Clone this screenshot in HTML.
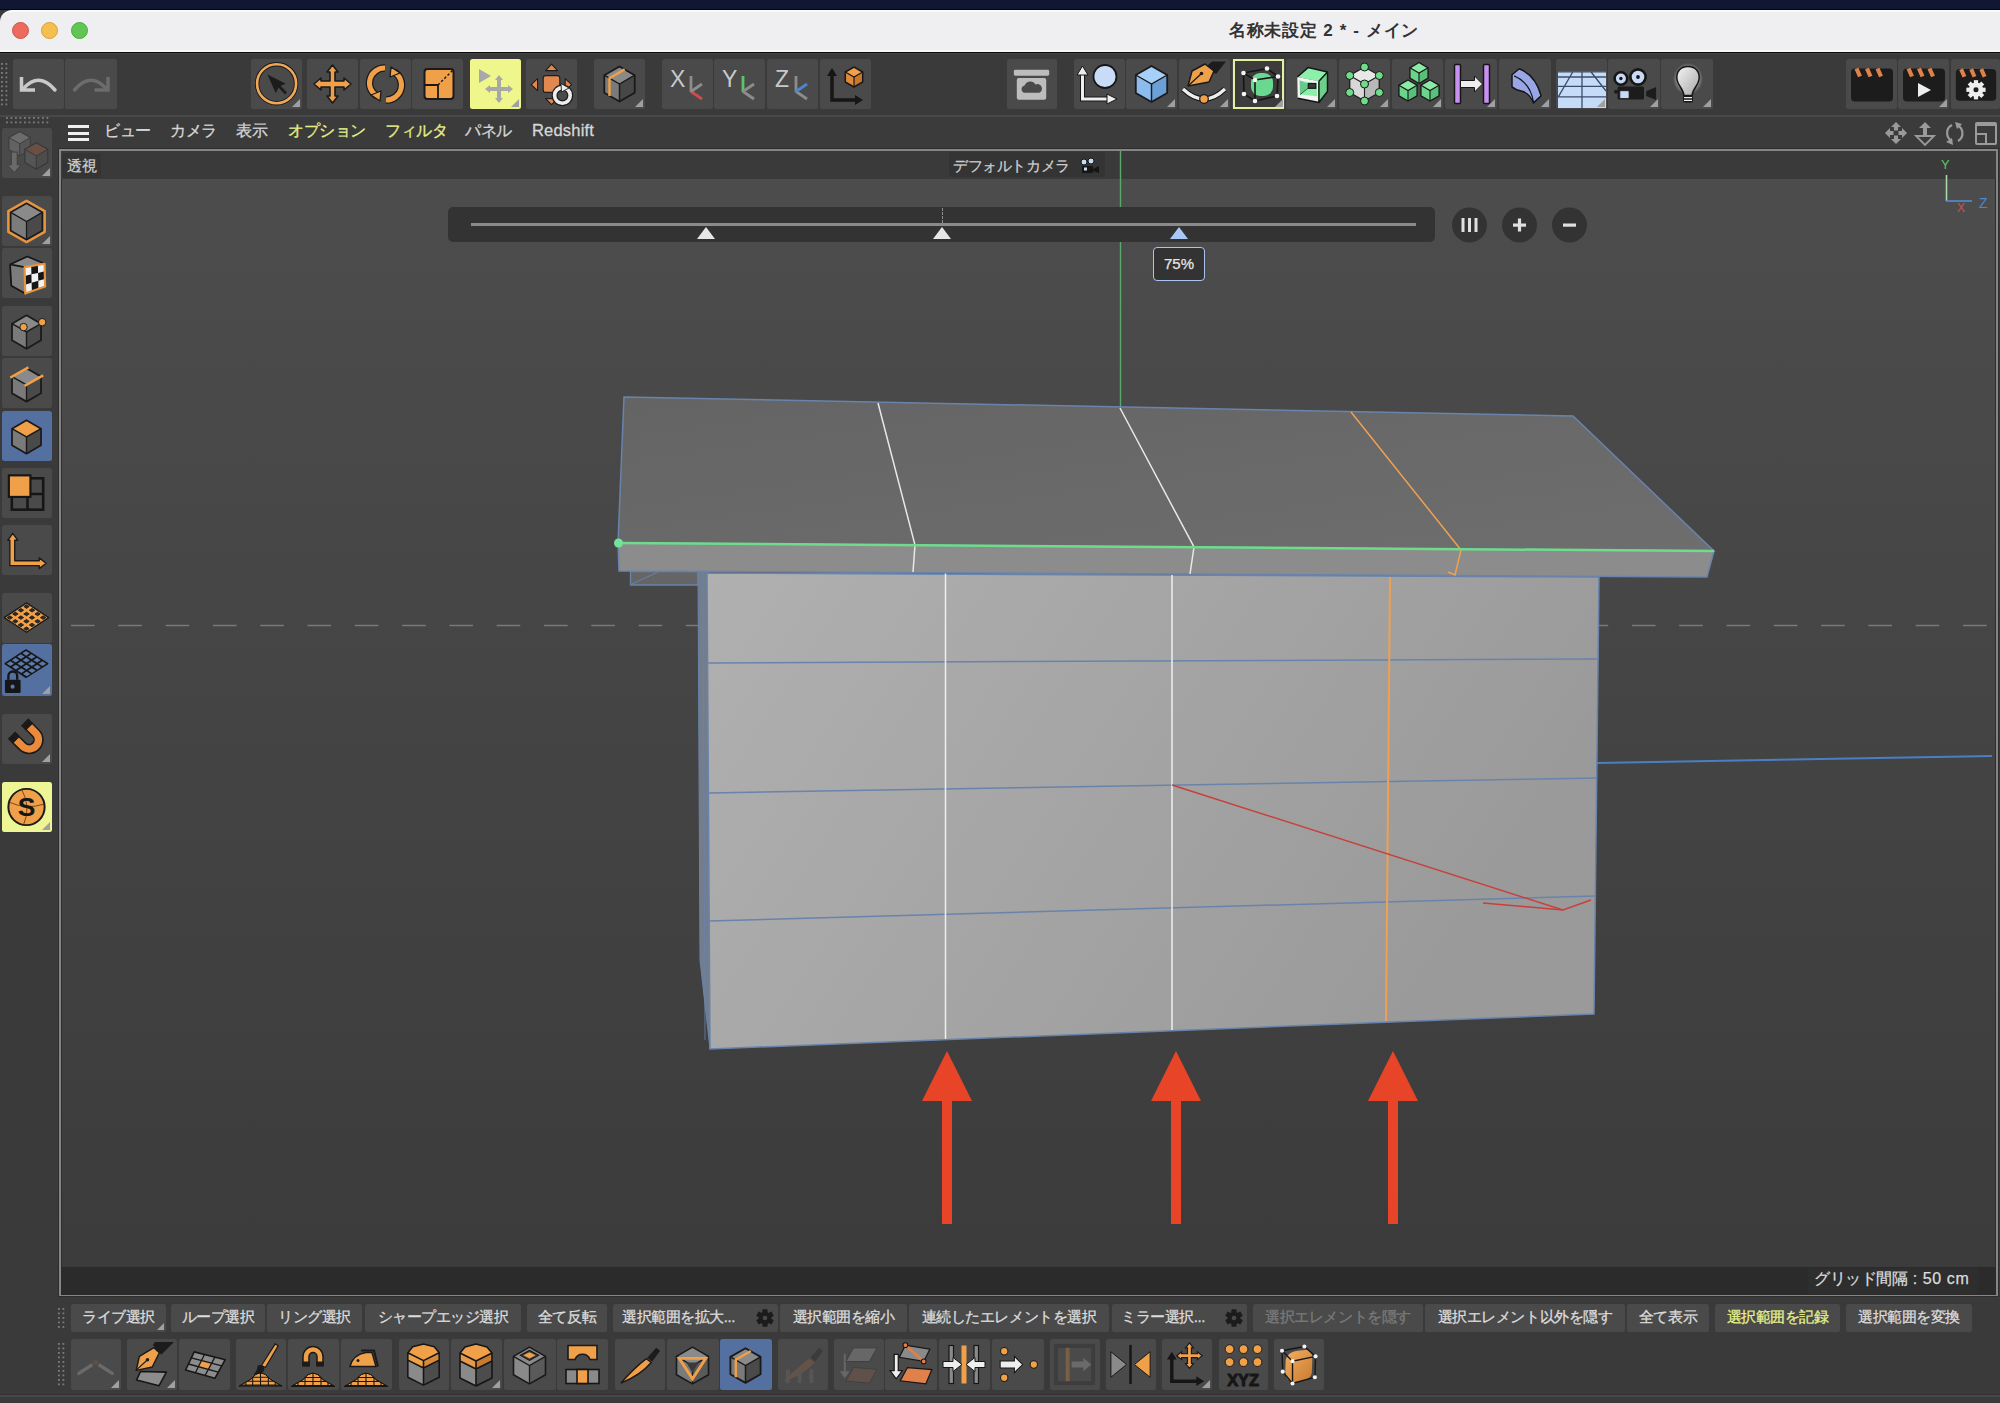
<!DOCTYPE html>
<html><head><meta charset="utf-8">
<style>
*{margin:0;padding:0;box-sizing:border-box}
html,body{width:2000px;height:1403px;overflow:hidden;background:#3a3a3a;font-family:"Liberation Sans",sans-serif}
.a{position:absolute}
#navy{left:0;top:0;width:2000px;height:10px;background:#111633;border-bottom:1px solid #05060f}
#title{left:0;top:10px;width:2000px;height:42px;background:#efeff2;border-radius:12px 0 0 0;border-top:2px solid #f9f9fb;border-bottom:2px solid #f7f7f9}
#title .t{left:1229px;top:7px;font-size:17px;color:#333;letter-spacing:0.7px;font-weight:700;white-space:nowrap}
.tl{width:17px;height:17px;border-radius:50%;top:10px}
#blk{left:0;top:52px;width:2000px;height:1.5px;background:#0a0a0a}
#tb{left:0;top:53px;width:2000px;height:64px;background:#3a3a3a;border-top:1px solid #444;border-bottom:2px solid #484848}
.b{position:absolute;width:51px;height:50px;background:#4a4a4a;border-radius:2.5px}
.b svg{position:absolute;left:0;top:0}
.tri{position:absolute;right:2px;bottom:2px;width:0;height:0;border-left:8px solid transparent;border-bottom:8px solid #a0a0a0}
#menu{left:59px;top:117px;width:1941px;height:32px;background:#3b3b3b}
.mi{position:absolute;top:4px;font-size:15.5px;letter-spacing:-0.4px;-webkit-text-stroke:0.3px currentColor;color:#d6d6d6;white-space:nowrap}
.mi.y{color:#e3ef86}
#vp{left:59px;top:149px;width:1939px;height:1147px;border:2px solid #858585;box-shadow:0 0 0 1px #2e2e2e,inset 0 0 0 1px #2e2e2e;background:linear-gradient(#4d4d4d,#3b3b3b)}
#vh{left:61px;top:151px;width:1935px;height:28px;background:#3a3a3a}
#status{left:61px;top:1267px;width:1935px;height:28px;background:#2b2b2b}
.sb{position:absolute;top:1304px;height:28px;background:#4a4a4a;border-radius:2.5px;font-size:15px;letter-spacing:-0.45px;-webkit-text-stroke:0.3px currentColor;color:#dcdcdc;white-space:nowrap;text-align:center;line-height:26px}
.grip{position:absolute;background-image:linear-gradient(transparent 1.8px,#3a3a3a 1.8px),linear-gradient(90deg,#7c7c7c 1.8px,transparent 1.8px);background-size:4.5px 4.5px}

.lbl{font-size:15px;letter-spacing:-0.4px;-webkit-text-stroke:0.25px currentColor;color:#cfcfcf;white-space:nowrap}
</style></head><body>

<div id="navy" class="a"></div>
<div id="title" class="a">
  <div class="a tl" style="left:12px;background:#ed6a5e;border:0.6px solid #d05548"></div>
  <div class="a tl" style="left:41px;background:#f5bf4f;border:0.6px solid #d8a040"></div>
  <div class="a tl" style="left:71px;background:#61c554;border:0.6px solid #4ea840"></div>
  <div class="a t">名称未設定<span style="letter-spacing:1.1px"> 2 * - </span>メイン</div>
</div>
<div id="blk" class="a"></div>
<div id="tb" class="a"></div>

<div id="menu" class="a">
  <div class="a" style="left:9px;top:8px;width:21px;height:16px;border-top:3px solid #f0f0f0;border-bottom:3px solid #f0f0f0"><div style="margin-top:3.5px;height:3px;background:#f0f0f0"></div></div>
  <div class="mi" style="left:45px">ビュー</div>
  <div class="mi" style="left:111px">カメラ</div>
  <div class="mi" style="left:177px">表示</div>
  <div class="mi y" style="left:229px">オプション</div>
  <div class="mi y" style="left:326px">フィルタ</div>
  <div class="mi" style="left:406px">パネル</div>
  <div class="mi" style="left:473px;font-size:16.5px;letter-spacing:0.2px">Redshift</div>
</div>

<div id="vp" class="a"></div>
<div id="vh" class="a"></div>
<div id="status" class="a"></div>

<svg class="a" style="left:0;top:0" width="2000" height="1403" viewBox="0 0 2000 1403">
<defs>
<linearGradient id="gtop" x1="0" y1="0" x2="1" y2="1"><stop offset="0" stop-color="#646464"/><stop offset="1" stop-color="#6e6e6e"/></linearGradient>
<linearGradient id="gbody" x1="0" y1="0" x2="1" y2="0.35"><stop offset="0" stop-color="#b0b0b0"/><stop offset="1" stop-color="#9a9a9a"/></linearGradient>
</defs>
<!-- dashed horizon -->
<line x1="71" y1="625.5" x2="1994" y2="625.5" stroke="#7a7a7a" stroke-width="1.6" stroke-dasharray="23.6 23.7"/>

<!-- green world Y axis -->
<line x1="1120.5" y1="151" x2="1120.5" y2="408" stroke="#5aa86a" stroke-width="1.4"/>
<!-- blue axis right -->
<line x1="1597" y1="763" x2="1992" y2="756" stroke="#4a7fc6" stroke-width="2"/>
<!-- roof underside piece -->
<polygon points="630.5,571.5 698,571.5 698,585 630.5,585" fill="#656565" stroke="#6884ac" stroke-width="1.3"/>
<line x1="632" y1="584" x2="658" y2="572" stroke="#6884ac" stroke-width="1"/>
<!-- body side strip -->
<polygon points="698,572 708,572 710,1049 700,960" fill="#737d8c" stroke="#6884ac" stroke-width="1"/><line x1="703" y1="573" x2="705" y2="1040" stroke="#6884ac" stroke-width="0.8"/>
<!-- body front -->
<polygon points="707,573 1599,577 1594,1014 710,1049" fill="url(#gbody)" stroke="#6884ac" stroke-width="1.5"/>
<!-- body horizontal lines -->
<polyline points="708,663 1599,659" fill="none" stroke="#6884ac" stroke-width="1.5"/>
<polyline points="709,793 1597,778" fill="none" stroke="#6884ac" stroke-width="1.5"/>
<polyline points="709,921 1595,896" fill="none" stroke="#6884ac" stroke-width="1.5"/>
<!-- vertical lines -->
<line x1="945.5" y1="573" x2="945.5" y2="1039" stroke="#efefef" stroke-width="1.5"/>
<line x1="1172" y1="575" x2="1172" y2="1030" stroke="#efefef" stroke-width="1.5"/>
<line x1="1390" y1="577" x2="1386" y2="1021" stroke="#f0a050" stroke-width="2"/>
<!-- red lines -->
<polyline points="1172,785 1563,910" fill="none" stroke="#c8403a" stroke-width="1.5"/>
<polyline points="1483,903 1563,910 1591,900" fill="none" stroke="#c8403a" stroke-width="1.5"/>
<!-- roof top -->
<polygon points="624,397 1573,416 1714,551 618,543" fill="url(#gtop)" stroke="#6884ac" stroke-width="1.5"/>
<!-- roof front -->
<polygon points="618,543 1714,551 1707,577 619,571" fill="#8c8c8c" stroke="#6884ac" stroke-width="1.5"/>
<!-- roof cut lines -->
<polyline points="878,403 915,545 913,572" fill="none" stroke="#e8e8e8" stroke-width="1.5"/>
<polyline points="1120,408 1194,547 1190,574" fill="none" stroke="#e8e8e8" stroke-width="1.5"/>
<polyline points="1351,412 1461,550 1455,575 1448,572" fill="none" stroke="#f0a050" stroke-width="1.5"/>
<!-- green edge -->
<line x1="618" y1="543" x2="1714" y2="551" stroke="#6fdc8c" stroke-width="2.5"/>
<circle cx="618.5" cy="543" r="4.5" fill="#74e39a"/>
<!-- red arrows -->
<g fill="#e84427">
<polygon points="947,1051 922,1101 972,1101"/><rect x="942" y="1100" width="10" height="124"/>
<polygon points="1176,1051 1151,1101 1201,1101"/><rect x="1171" y="1100" width="10" height="124"/>
<polygon points="1393,1051 1368,1101 1418,1101"/><rect x="1388" y="1100" width="10" height="124"/>
</g>
</svg>


<div class="b" style="left:13px;top:59px;width:51px;height:50px;background:#4a4a4a;"><svg width="51" height="50" viewBox="0 0 51 50"><path d="M8.5,18 V31 H22" fill="none" stroke="#c9c9c9" stroke-width="3.5"/><path d="M10,30 Q26,12 42,31" fill="none" stroke="#c9c9c9" stroke-width="3.5" stroke-linecap="round"/></svg></div>
<div class="b" style="left:65px;top:59px;width:52px;height:50px;background:#4a4a4a;"><svg width="52" height="50" viewBox="0 0 51 50"><path d="M42.5,18 V31 H29" fill="none" stroke="#6c6c6c" stroke-width="3.5"/><path d="M41,30 Q25,12 9,31" fill="none" stroke="#6c6c6c" stroke-width="3.5" stroke-linecap="round"/></svg></div>
<div class="b" style="left:251px;top:59px;width:51px;height:50px;background:#4a4a4a;"><svg width="51" height="50" viewBox="0 0 51 50"><circle cx="25.6" cy="24.7" r="19.5" fill="none" stroke="#1a1a1a" stroke-width="4.4"/><circle cx="25.6" cy="24.7" r="19.5" fill="none" stroke="#f0a858" stroke-width="2.6"/><path d="M16.4,15.6 L34.9,24.7 L28.3,27.2 L24.7,34 Z" fill="#1c1c1c"/><path d="M27,26 L35,34.5" stroke="#1c1c1c" stroke-width="2.6"/></svg><div class="tri"></div></div>
<div class="b" style="left:307px;top:59px;width:51px;height:50px;background:#4a4a4a;"><svg width="51" height="50" viewBox="0 0 51 50"><path d="M25.5,6 L31,13 H28 V22 H37 V19 L44,25 L37,31 V28 H28 V37 H31 L25.5,44 L20,37 H23 V28 H14 V31 L7,25 L14,19 V22 H23 V13 H20 Z" fill="#f0a048" stroke="#1a1a1a" stroke-width="1.6" stroke-linejoin="round"/></svg></div>
<div class="b" style="left:360px;top:59px;width:51px;height:50px;background:#4a4a4a;"><svg width="51" height="50" viewBox="0 0 51 50"><path d="M25,9 A15,15 0 0 0 17,37" fill="none" stroke="#1a1a1a" stroke-width="7.5"/><path d="M25,9 A15,15 0 0 0 17,37" fill="none" stroke="#f0a048" stroke-width="5"/><path d="M26,41 A15,15 0 0 0 34,13" fill="none" stroke="#1a1a1a" stroke-width="7.5"/><path d="M26,41 A15,15 0 0 0 34,13" fill="none" stroke="#f0a048" stroke-width="5"/><path d="M11,36 L21,32 L20,42 Z" fill="#f0a048" stroke="#1a1a1a" stroke-width="1.3" stroke-linejoin="round"/><path d="M40,14 L30,18 L31,8 Z" fill="#f0a048" stroke="#1a1a1a" stroke-width="1.3" stroke-linejoin="round"/></svg></div>
<div class="b" style="left:412px;top:59px;width:51px;height:50px;background:#4a4a4a;"><svg width="51" height="50" viewBox="0 0 51 50"><rect x="12.5" y="10" width="29" height="30" rx="3" fill="#f0a048" stroke="#1a1a1a" stroke-width="2"/><path d="M12.5,26 H26 V40" fill="none" stroke="#1a1a1a" stroke-width="1.8"/><path d="M26,26 L41,11" stroke="#1a1a1a" stroke-width="1.4" stroke-dasharray="2.5 2"/></svg></div>
<div class="b" style="left:470px;top:59px;width:51px;height:50px;background:#eef68c;"><svg width="51" height="50" viewBox="0 0 51 50"><path d="M9,10 L9,24 L21,17 Z" fill="#a8a8a8"/><path d="M29,16 L33,21 H31 V28 H38 V26 L43,30 L38,34 V32 H31 V39 H33 L29,44 L25,39 H27 V32 H20 V34 L15,30 L20,26 V28 H27 V21 H25 Z" fill="#a8a8a8"/></svg><div class="tri"></div></div>
<div class="b" style="left:526px;top:59px;width:51px;height:50px;background:#4a4a4a;"><svg width="51" height="50" viewBox="0 0 51 50"><g stroke="#1e1e1e" stroke-width="1.1" stroke-linejoin="round"><path d="M25.6,5.2 L31.6,11.6 H19.6 Z" fill="#e08850"/><path d="M5.2,25.6 L11.6,19.6 V31.6 Z" fill="#e08850"/><path d="M45.6,25.6 L39.2,19.6 V31.6 Z" fill="#e08850"/><path d="M25.6,45.6 L31.6,39.6 H19.6 Z" fill="#e08850"/><rect x="17.2" y="16.6" width="16.6" height="16.8" rx="2.5" fill="#e08850"/></g><circle cx="36.4" cy="36.4" r="7.8" fill="none" stroke="#1e1e1e" stroke-width="6"/><circle cx="36.4" cy="36.4" r="7.8" fill="none" stroke="#eeeeee" stroke-width="3.6"/><path d="M35,24.5 L43,29 L35.5,33 Z" fill="#eeeeee" stroke="#1e1e1e" stroke-width="0.9"/></svg></div>
<div class="b" style="left:594px;top:59px;width:51px;height:50px;background:#4a4a4a;"><svg width="51" height="50" viewBox="0 0 51 50"><polygon points="25.5,7.5 40.7,16.2 25.5,25.0 10.3,16.2" fill="#8a8a8a"/><polygon points="10.3,16.2 25.5,25.0 25.5,42.5 10.3,33.8" fill="#7a7a7a"/><polygon points="25.5,25.0 40.7,16.2 40.7,33.8 25.5,42.5" fill="#474747"/><polygon points="25.5,7.5 40.7,16.2 40.7,33.8 25.5,42.5 10.3,33.8 10.3,16.2" fill="none" stroke="#1a1a1a" stroke-width="1.8" stroke-linejoin="round"/><polyline points="10.3,16.2 25.5,25.0 40.7,16.2" fill="none" stroke="#1a1a1a" stroke-width="1.4400000000000002"/><line x1="25.5" y1="25" x2="25.5" y2="42.5" stroke="#1a1a1a" stroke-width="1.4400000000000002"/><polyline points="15.5,37 15.5,19.2 30.7,10.4" fill="none" stroke="#f0a048" stroke-width="2.4"/></svg><div class="tri"></div></div>
<div class="b" style="left:662px;top:59px;width:51px;height:50px;background:#4a4a4a;"><svg width="51" height="50" viewBox="0 0 51 50"><text x="8" y="28" font-family="Liberation Sans" font-size="23" fill="#c9c9c9">X</text><line x1="29" y1="17" x2="29" y2="33" stroke="#8c8c8c" stroke-width="2.8"/><line x1="29" y1="32.5" x2="40" y2="40" stroke="#d24a4a" stroke-width="2.8"/><line x1="29" y1="32.5" x2="40" y2="25" stroke="#8c8c8c" stroke-width="2.8"/></svg></div>
<div class="b" style="left:714px;top:59px;width:51px;height:50px;background:#4a4a4a;"><svg width="51" height="50" viewBox="0 0 51 50"><text x="8" y="28" font-family="Liberation Sans" font-size="23" fill="#c9c9c9">Y</text><line x1="29" y1="17" x2="29" y2="33" stroke="#5ec46a" stroke-width="2.8"/><line x1="29" y1="32.5" x2="40" y2="40" stroke="#8c8c8c" stroke-width="2.8"/><line x1="29" y1="32.5" x2="40" y2="25" stroke="#8c8c8c" stroke-width="2.8"/></svg></div>
<div class="b" style="left:767px;top:59px;width:51px;height:50px;background:#4a4a4a;"><svg width="51" height="50" viewBox="0 0 51 50"><text x="8" y="28" font-family="Liberation Sans" font-size="23" fill="#c9c9c9">Z</text><line x1="29" y1="17" x2="29" y2="33" stroke="#8c8c8c" stroke-width="2.8"/><line x1="29" y1="32.5" x2="40" y2="40" stroke="#8c8c8c" stroke-width="2.8"/><line x1="29" y1="32.5" x2="40" y2="25" stroke="#4a86d4" stroke-width="2.8"/></svg></div>
<div class="b" style="left:820px;top:59px;width:51px;height:50px;background:#4a4a4a;"><svg width="51" height="50" viewBox="0 0 51 50"><path d="M12,11 V41 H40" fill="none" stroke="#161616" stroke-width="3.5"/><path d="M7,17 L12,9 L17,17 Z M35,36 L43,41 L35,46 Z" fill="#161616"/><polygon points="34.0,8.0 42.7,13.0 34.0,18.0 25.3,13.0" fill="#f2a04c"/><polygon points="25.3,13.0 34.0,18.0 34.0,28.0 25.3,23.0" fill="#e08a38"/><polygon points="34.0,18.0 42.7,13.0 42.7,23.0 34.0,28.0" fill="#c8782e"/><polygon points="34.0,8.0 42.7,13.0 42.7,23.0 34.0,28.0 25.3,23.0 25.3,13.0" fill="none" stroke="#1a1a1a" stroke-width="1.5" stroke-linejoin="round"/><polyline points="25.3,13.0 34.0,18.0 42.7,13.0" fill="none" stroke="#1a1a1a" stroke-width="1.2000000000000002"/><line x1="34" y1="18" x2="34" y2="28" stroke="#1a1a1a" stroke-width="1.2000000000000002"/></svg></div>
<div class="b" style="left:1007px;top:59px;width:50px;height:50px;background:#4a4a4a;"><svg width="50" height="50" viewBox="0 0 51 50"><rect x="7" y="10.5" width="36" height="6" rx="1.5" fill="#bdbdbd"/><rect x="10" y="19" width="30" height="22" rx="2" fill="#bdbdbd"/><path d="M17,34 a4,4 0 0 1 1,-7.5 a6,6 0 0 1 11,-1 a4.5,4.5 0 0 1 4,8.5 Z" fill="#4a4a4a"/></svg></div>
<div class="b" style="left:1074px;top:59px;width:51px;height:50px;background:#4a4a4a;"><svg width="51" height="50" viewBox="0 0 51 50"><path d="M8.5,12 V40 H35" fill="none" stroke="#161616" stroke-width="5"/><path d="M8.5,12 V40 H35" fill="none" stroke="#eeeeee" stroke-width="3"/><path d="M3,16 L8.5,7 L14,16 Z M33,35 L43,40 L33,45 Z" fill="#eeeeee" stroke="#161616" stroke-width="1"/><circle cx="31" cy="17.5" r="11.5" fill="#c8dcf8" stroke="#161616" stroke-width="1.8"/></svg></div>
<div class="b" style="left:1126px;top:59px;width:51px;height:50px;background:#4a4a4a;"><svg width="51" height="50" viewBox="0 0 51 50"><polygon points="25.5,7.0 41.2,16.0 25.5,25.0 9.8,16.0" fill="#a6d0f8"/><polygon points="9.8,16.0 25.5,25.0 25.5,43.0 9.8,34.0" fill="#8cbcee"/><polygon points="25.5,25.0 41.2,16.0 41.2,34.0 25.5,43.0" fill="#6a9fd8"/><polygon points="25.5,7.0 41.2,16.0 41.2,34.0 25.5,43.0 9.8,34.0 9.8,16.0" fill="none" stroke="#1a1a1a" stroke-width="1.8" stroke-linejoin="round"/><polyline points="9.8,16.0 25.5,25.0 41.2,16.0" fill="none" stroke="#1a1a1a" stroke-width="1.4400000000000002"/><line x1="25.5" y1="25" x2="25.5" y2="43" stroke="#1a1a1a" stroke-width="1.4400000000000002"/></svg><div class="tri"></div></div>
<div class="b" style="left:1179px;top:59px;width:51px;height:50px;background:#4a4a4a;"><svg width="51" height="50" viewBox="0 0 51 50"><path d="M27,8 L33,2.5 H47 L37,15 Z" fill="#1c1c1c"/><path d="M9,27 L13,12 L26,5 L35,12 L30,23 Z" fill="#f0a048" stroke="#1a1a1a" stroke-width="1.5" stroke-linejoin="round"/><path d="M9.5,26.5 L22,15" stroke="#1a1a1a" stroke-width="1.3"/><circle cx="22.5" cy="14.5" r="1.8" fill="#1a1a1a"/><path d="M4,30 Q25,50 46,30" fill="none" stroke="#161616" stroke-width="5.2"/><path d="M4,30 Q25,50 46,30" fill="none" stroke="#eeeeee" stroke-width="3.2"/><circle cx="25" cy="40" r="4.3" fill="#f0a048" stroke="#1a1a1a" stroke-width="1.2"/></svg><div class="tri"></div></div>
<div class="b" style="left:1232px;top:59px;width:53px;height:50px;background:#4a4a4a;"><svg width="53" height="50" viewBox="0 0 51 50"><rect x="1" y="1" width="49" height="48" fill="#3c3c3c" stroke="#e6eea0" stroke-width="2"/><rect x="18" y="14" width="22" height="23" rx="9" fill="#6ad890"/><path d="M10.5,14 L34,9.5 L45,17.5 L44,37 L22,42 L11,35 Z M10.5,14 L22,21 L45,17.5 M22,21 V42" fill="none" stroke="#161616" stroke-width="1.6"/><g fill="#f4f4f4"><circle cx="10.5" cy="14" r="2.3"/><circle cx="34" cy="9.5" r="2.3"/><circle cx="45" cy="17.5" r="2.3"/><circle cx="44" cy="37" r="2.3"/><circle cx="22" cy="42" r="2.3"/><circle cx="11" cy="35" r="2.3"/><circle cx="22" cy="21" r="2.3"/></g></svg><div class="tri"></div></div>
<div class="b" style="left:1286px;top:59px;width:51px;height:50px;background:#4a4a4a;"><svg width="51" height="50" viewBox="0 0 51 50"><polygon points="11.3,18 22.3,8.4 41.5,12.9 32.9,22.3" fill="#8cf0aa"/><polygon points="32.9,22.3 41.5,12.9 41.5,32.5 32.9,43.5" fill="#6cd08c"/><polygon points="11.3,18 32.9,22.3 32.9,43.5 11.7,39.2" fill="#f4f4f4"/><polygon points="13.7,21.5 31,24.7 31,37.2 14,35.6" fill="#8cf0aa"/><polygon points="13.7,21.5 22.3,25 22.3,29 14,35.6" fill="#6cc88a"/><rect x="22.3" y="24.5" width="7.5" height="4.8" fill="#3a3a3a" stroke="#161616" stroke-width="1.2"/><path d="M14,35.6 L22.3,29" stroke="#146030" stroke-width="0.9"/><path d="M11.3,18 L22.3,8.4 L41.5,12.9 V32.5 L32.9,43.5 L11.7,39.2 M32.9,22.3 L41.5,12.9 M32.9,22.3 V43.5" fill="none" stroke="#101a12" stroke-width="1.5" stroke-linejoin="round"/></svg><div class="tri"></div></div>
<div class="b" style="left:1339px;top:59px;width:51px;height:50px;background:#4a4a4a;"><svg width="51" height="50" viewBox="0 0 51 50"><polygon points="25.5,8.0 40.3,16.5 25.5,25.0 10.7,16.5" fill="#e8e8e8"/><polygon points="10.7,16.5 25.5,25.0 25.5,42.0 10.7,33.5" fill="#d8d8d8"/><polygon points="25.5,25.0 40.3,16.5 40.3,33.5 25.5,42.0" fill="#b8b8b8"/><polygon points="25.5,8.0 40.3,16.5 40.3,33.5 25.5,42.0 10.7,33.5 10.7,16.5" fill="none" stroke="#222" stroke-width="1.4" stroke-linejoin="round"/><polyline points="10.7,16.5 25.5,25.0 40.3,16.5" fill="none" stroke="#222" stroke-width="1.1199999999999999"/><line x1="25.5" y1="25" x2="25.5" y2="42" stroke="#222" stroke-width="1.1199999999999999"/><circle cx="25.5" cy="8" r="4" fill="#6fdc8c" stroke="#161616" stroke-width="1"/><circle cx="40.3" cy="16.5" r="4" fill="#6fdc8c" stroke="#161616" stroke-width="1"/><circle cx="40.3" cy="33.5" r="4" fill="#6fdc8c" stroke="#161616" stroke-width="1"/><circle cx="25.5" cy="42" r="4" fill="#6fdc8c" stroke="#161616" stroke-width="1"/><circle cx="10.7" cy="33.5" r="4" fill="#6fdc8c" stroke="#161616" stroke-width="1"/><circle cx="10.7" cy="16.5" r="4" fill="#6fdc8c" stroke="#161616" stroke-width="1"/><circle cx="25.5" cy="25" r="4" fill="#6fdc8c" stroke="#161616" stroke-width="1"/></svg><div class="tri"></div></div>
<div class="b" style="left:1392px;top:59px;width:51px;height:50px;background:#4a4a4a;"><svg width="51" height="50" viewBox="0 0 51 50"><polygon points="27.0,3.5 36.1,8.8 27.0,14.0 17.9,8.8" fill="#8aeaa6"/><polygon points="17.9,8.8 27.0,14.0 27.0,24.5 17.9,19.2" fill="#6ad48a"/><polygon points="27.0,14.0 36.1,8.8 36.1,19.2 27.0,24.5" fill="#58c078"/><polygon points="27.0,3.5 36.1,8.8 36.1,19.2 27.0,24.5 17.9,19.2 17.9,8.8" fill="none" stroke="#1a1a1a" stroke-width="1.4" stroke-linejoin="round"/><polyline points="17.9,8.8 27.0,14.0 36.1,8.8" fill="none" stroke="#1a1a1a" stroke-width="1.1199999999999999"/><line x1="27" y1="14" x2="27" y2="24.5" stroke="#1a1a1a" stroke-width="1.1199999999999999"/><polygon points="16.0,21.0 25.1,26.2 16.0,31.5 6.9,26.2" fill="#8aeaa6"/><polygon points="6.9,26.2 16.0,31.5 16.0,42.0 6.9,36.8" fill="#6ad48a"/><polygon points="16.0,31.5 25.1,26.2 25.1,36.8 16.0,42.0" fill="#58c078"/><polygon points="16.0,21.0 25.1,26.2 25.1,36.8 16.0,42.0 6.9,36.8 6.9,26.2" fill="none" stroke="#1a1a1a" stroke-width="1.4" stroke-linejoin="round"/><polyline points="6.9,26.2 16.0,31.5 25.1,26.2" fill="none" stroke="#1a1a1a" stroke-width="1.1199999999999999"/><line x1="16" y1="31.5" x2="16" y2="42.0" stroke="#1a1a1a" stroke-width="1.1199999999999999"/><polygon points="38.0,21.0 47.1,26.2 38.0,31.5 28.9,26.2" fill="#8aeaa6"/><polygon points="28.9,26.2 38.0,31.5 38.0,42.0 28.9,36.8" fill="#6ad48a"/><polygon points="38.0,31.5 47.1,26.2 47.1,36.8 38.0,42.0" fill="#58c078"/><polygon points="38.0,21.0 47.1,26.2 47.1,36.8 38.0,42.0 28.9,36.8 28.9,26.2" fill="none" stroke="#1a1a1a" stroke-width="1.4" stroke-linejoin="round"/><polyline points="28.9,26.2 38.0,31.5 47.1,26.2" fill="none" stroke="#1a1a1a" stroke-width="1.1199999999999999"/><line x1="38" y1="31.5" x2="38" y2="42.0" stroke="#1a1a1a" stroke-width="1.1199999999999999"/></svg><div class="tri"></div></div>
<div class="b" style="left:1445px;top:59px;width:52px;height:50px;background:#4a4a4a;"><svg width="52" height="50" viewBox="0 0 51 50"><rect x="9" y="5.5" width="6" height="39" rx="1" fill="#c890f0" stroke="#161616" stroke-width="1.5"/><rect x="38" y="5.5" width="6" height="39" rx="1" fill="#c890f0" stroke="#161616" stroke-width="1.5"/><path d="M15,21.5 H29 V17 L37,25 L29,33 V28.5 H15 Z" fill="#eeeeee" stroke="#161616" stroke-width="1"/></svg><div class="tri"></div></div>
<div class="b" style="left:1499px;top:59px;width:52px;height:50px;background:#4a4a4a;"><svg width="52" height="50" viewBox="0 0 51 50"><path d="M12.5,15.8 L19.7,9.75 Q36,16 41.6,36.7 L34,43.9 Q30,34 22.4,32.3 Q16,31 12.5,27.9 Z" fill="#98a6e6" stroke="#161616" stroke-width="1.5" stroke-linejoin="round"/><path d="M14.7,16.9 Q31,24 34,43.3" fill="none" stroke="#161616" stroke-width="1.2"/></svg><div class="tri"></div></div>
<div class="b" style="left:1556px;top:59px;width:51px;height:50px;background:#4a4a4a;"><svg width="51" height="50" viewBox="0 0 51 50"><rect x="2" y="12.5" width="48" height="36.5" fill="#c4dcf8"/><path d="M2,12.8 H50 M2,18 H50 M2,27.4 H50 M2,37.8 H50 M26,12.5 V49 M17,12.5 L2.3,37.8 M34.7,12.5 L50,32" stroke="#3c4c68" stroke-width="1.3" fill="none"/></svg><div class="tri"></div></div>
<div class="b" style="left:1608px;top:59px;width:52px;height:50px;background:#4a4a4a;"><svg width="52" height="50" viewBox="0 0 51 50"><circle cx="12.4" cy="19.5" r="6.3" fill="#c8daf4" stroke="#161616" stroke-width="2.6"/><circle cx="12.4" cy="19.5" r="1.7" fill="#161616"/><circle cx="29.5" cy="18" r="7.6" fill="#c8daf4" stroke="#161616" stroke-width="2.6"/><circle cx="29.5" cy="18" r="1.9" fill="#161616"/><rect x="9" y="27.4" width="26.5" height="13.1" rx="1.5" fill="#1c1c1c"/><rect x="5.8" y="31" width="4" height="3.5" fill="#1c1c1c"/><rect x="11.3" y="31.7" width="9.3" height="7.8" rx="1" fill="#c8daf4" stroke="#161616" stroke-width="0.8"/><path d="M37.7,32.3 L47.6,27.9 V41 L37.7,37 Z" fill="#1c1c1c"/></svg><div class="tri"></div></div>
<div class="b" style="left:1661px;top:59px;width:52px;height:50px;background:#4a4a4a;"><svg width="52" height="50" viewBox="0 0 51 50"><defs><radialGradient id="glow"><stop offset="0.55" stop-color="#ffffff" stop-opacity="0.55"/><stop offset="1" stop-color="#ffffff" stop-opacity="0"/></radialGradient><linearGradient id="bulbg" x1="0" y1="0" x2="1" y2="1"><stop offset="0" stop-color="#f4f4f4"/><stop offset="1" stop-color="#a8a8a8"/></linearGradient></defs><ellipse cx="26.5" cy="20" rx="15" ry="16" fill="url(#glow)"/><path d="M26.5,7.5 C35,7.5 38.5,14 37.5,20.5 C36.5,27 31,30 30.5,36.5 H22.5 C22,30 16.5,27 15.5,20.5 C14.5,14 18,7.5 26.5,7.5 Z" fill="url(#bulbg)" stroke="#161616" stroke-width="1.5"/><rect x="21.5" y="36.5" width="10" height="7" rx="2" fill="#161616"/><path d="M22.5,38.7 H30.5 M22.5,41.3 H30.5" stroke="#eeeeee" stroke-width="1.2"/></svg><div class="tri"></div></div>
<div class="b" style="left:1846px;top:59px;width:51px;height:50px;background:#4a4a4a;"><svg width="51" height="50" viewBox="0 0 51 50"><rect x="5" y="9.5" width="42" height="33" rx="4" fill="#1c1c1c"/><path d="M10.5,9.5 L14,17.5 M21,9.5 L24.5,17.5 M31.5,9.5 L35,17.5" stroke="#e0804a" stroke-width="4.2"/></svg></div>
<div class="b" style="left:1898px;top:59px;width:51px;height:50px;background:#4a4a4a;"><svg width="51" height="50" viewBox="0 0 51 50"><rect x="5" y="9.5" width="42" height="33" rx="4" fill="#1c1c1c"/><path d="M10.5,9.5 L14,17.5 M21,9.5 L24.5,17.5 M31.5,9.5 L35,17.5" stroke="#e0804a" stroke-width="4.2"/><path d="M20,24 L33,31 L20,38 Z" fill="#ededed"/></svg><div class="tri"></div></div>
<div class="b" style="left:1951px;top:59px;width:49px;height:50px;background:#4a4a4a;"><svg width="49" height="50" viewBox="0 0 51 50"><rect x="5" y="9.5" width="42" height="33" rx="4" fill="#1c1c1c"/><path d="M10.5,9.5 L14,17.5 M21,9.5 L24.5,17.5 M31.5,9.5 L35,17.5" stroke="#e0804a" stroke-width="4.2"/><g transform="translate(26,31)"><circle r="7.5" fill="#ededed"/><rect x="-2.2" y="-10" width="4.4" height="5" fill="#ededed" transform="rotate(0)"/><rect x="-2.2" y="-10" width="4.4" height="5" fill="#ededed" transform="rotate(45)"/><rect x="-2.2" y="-10" width="4.4" height="5" fill="#ededed" transform="rotate(90)"/><rect x="-2.2" y="-10" width="4.4" height="5" fill="#ededed" transform="rotate(135)"/><rect x="-2.2" y="-10" width="4.4" height="5" fill="#ededed" transform="rotate(180)"/><rect x="-2.2" y="-10" width="4.4" height="5" fill="#ededed" transform="rotate(225)"/><rect x="-2.2" y="-10" width="4.4" height="5" fill="#ededed" transform="rotate(270)"/><rect x="-2.2" y="-10" width="4.4" height="5" fill="#ededed" transform="rotate(315)"/><circle r="2.6" fill="#1c1c1c"/></g></svg></div>
<div class="b" style="left:2px;top:128px;width:50px;height:50px;background:#4a4a4a;"><svg width="50" height="50" viewBox="0 0 51 50"><polygon points="18.0,3.0 28.9,9.2 18.0,15.5 7.1,9.2" fill="#6c6c6c"/><polygon points="7.1,9.2 18.0,15.5 18.0,28.0 7.1,21.8" fill="#626262"/><polygon points="18.0,15.5 28.9,9.2 28.9,21.8 18.0,28.0" fill="#555555"/><polygon points="18.0,3.0 28.9,9.2 28.9,21.8 18.0,28.0 7.1,21.8 7.1,9.2" fill="none" stroke="#3e3e3e" stroke-width="1.2" stroke-linejoin="round"/><polyline points="7.1,9.2 18.0,15.5 28.9,9.2" fill="none" stroke="#3e3e3e" stroke-width="0.96"/><line x1="18" y1="15.5" x2="18" y2="28.0" stroke="#3e3e3e" stroke-width="0.96"/><path d="M9.5,24 V37 H5.5 L12.5,45 L19.5,37 H15.5 V24 Z" fill="#6a6a6a" stroke="#3e3e3e" stroke-width="1"/><polygon points="35.0,14.5 46.7,21.2 35.0,28.0 23.3,21.2" fill="#6a5044"/><polygon points="23.3,21.2 35.0,28.0 35.0,41.5 23.3,34.8" fill="#555555"/><polygon points="35.0,28.0 46.7,21.2 46.7,34.8 35.0,41.5" fill="#4c4c4c"/><polygon points="35.0,14.5 46.7,21.2 46.7,34.8 35.0,41.5 23.3,34.8 23.3,21.2" fill="none" stroke="#383838" stroke-width="1.2" stroke-linejoin="round"/><polyline points="23.3,21.2 35.0,28.0 46.7,21.2" fill="none" stroke="#383838" stroke-width="0.96"/><line x1="35" y1="28" x2="35" y2="41.5" stroke="#383838" stroke-width="0.96"/></svg><div class="tri"></div></div>
<div class="b" style="left:2px;top:196px;width:50px;height:50px;background:#4a4a4a;"><svg width="50" height="50" viewBox="0 0 51 50"><polygon points="25,4.5 43.5,15 43.5,36 25,46.5 6.5,36 6.5,15" fill="none" stroke="#e8943e" stroke-width="2.6" stroke-linejoin="round"/><polygon points="25.0,7.0 41.1,16.2 25.0,25.5 8.9,16.2" fill="#8a8a8a"/><polygon points="8.9,16.2 25.0,25.5 25.0,44.0 8.9,34.8" fill="#7c7c7c"/><polygon points="25.0,25.5 41.1,16.2 41.1,34.8 25.0,44.0" fill="#4a4a4a"/><polygon points="25.0,7.0 41.1,16.2 41.1,34.8 25.0,44.0 8.9,34.8 8.9,16.2" fill="none" stroke="#1a1a1a" stroke-width="1.6" stroke-linejoin="round"/><polyline points="8.9,16.2 25.0,25.5 41.1,16.2" fill="none" stroke="#1a1a1a" stroke-width="1.2800000000000002"/><line x1="25" y1="25.5" x2="25" y2="44.0" stroke="#1a1a1a" stroke-width="1.2800000000000002"/></svg><div class="tri"></div></div>
<div class="b" style="left:2px;top:248px;width:50px;height:50px;background:#4a4a4a;"><svg width="50" height="50" viewBox="0 0 51 50"><polygon points="8.2,16.3 25.8,8.2 43.4,15.6 23,19" fill="#8a8a8a"/><polygon points="8.2,16.3 23,19 23.7,46 9.5,38" fill="#7c7c7c"/><path d="M8.2,16.3 L25.8,8.2 L43.4,15.6 M8.2,16.3 L23,19 M8.2,16.3 L9.5,38 L23.7,46" fill="none" stroke="#161616" stroke-width="1.8" stroke-linejoin="round"/><polygon points="23.0,19.0 43.4,15.6 44.0,38.7 23.7,46.0" fill="#f2f2f2"/><polygon points="23.2,28.0 30.0,26.4 30.2,35.0 23.5,37.0" fill="#161616"/><polygon points="29.8,17.9 36.6,16.7 36.8,24.9 30.0,26.4" fill="#161616"/><polygon points="30.2,35.0 37.0,33.0 37.2,41.1 30.5,43.6" fill="#161616"/><polygon points="36.8,24.9 43.6,23.3 43.8,31.0 37.0,33.0" fill="#161616"/><polygon points="23.0,19.0 43.4,15.6 44.0,38.7 23.7,46.0" fill="none" stroke="#e8943e" stroke-width="2.2" stroke-linejoin="round"/></svg></div>
<div class="b" style="left:2px;top:306px;width:50px;height:50px;background:#4a4a4a;"><svg width="50" height="50" viewBox="0 0 51 50"><polygon points="25.0,9.0 39.8,17.5 25.0,26.0 10.2,17.5" fill="#8a8a8a"/><polygon points="10.2,17.5 25.0,26.0 25.0,43.0 10.2,34.5" fill="#7a7a7a"/><polygon points="25.0,26.0 39.8,17.5 39.8,34.5 25.0,43.0" fill="#4a4a4a"/><polygon points="25.0,9.0 39.8,17.5 39.8,34.5 25.0,43.0 10.2,34.5 10.2,17.5" fill="none" stroke="#1a1a1a" stroke-width="1.8" stroke-linejoin="round"/><polyline points="10.2,17.5 25.0,26.0 39.8,17.5" fill="none" stroke="#1a1a1a" stroke-width="1.4400000000000002"/><line x1="25" y1="26" x2="25" y2="43" stroke="#1a1a1a" stroke-width="1.4400000000000002"/><circle cx="22" cy="21" r="3.8" fill="#f0a048" stroke="#1a1a1a" stroke-width="1"/><circle cx="41" cy="16" r="3.8" fill="#f0a048" stroke="#1a1a1a" stroke-width="1"/></svg></div>
<div class="b" style="left:2px;top:358px;width:50px;height:50px;background:#4a4a4a;"><svg width="50" height="50" viewBox="0 0 51 50"><polygon points="25.0,10.0 39.8,18.5 25.0,27.0 10.2,18.5" fill="#8a8a8a"/><polygon points="10.2,18.5 25.0,27.0 25.0,44.0 10.2,35.5" fill="#7a7a7a"/><polygon points="25.0,27.0 39.8,18.5 39.8,35.5 25.0,44.0" fill="#4a4a4a"/><polygon points="25.0,10.0 39.8,18.5 39.8,35.5 25.0,44.0 10.2,35.5 10.2,18.5" fill="none" stroke="#1a1a1a" stroke-width="1.8" stroke-linejoin="round"/><polyline points="10.2,18.5 25.0,27.0 39.8,18.5" fill="none" stroke="#1a1a1a" stroke-width="1.4400000000000002"/><line x1="25" y1="27" x2="25" y2="44" stroke="#1a1a1a" stroke-width="1.4400000000000002"/><path d="M8.5,19.5 L27,9 M23,28 L42,17.3" stroke="#f0a048" stroke-width="2.6"/></svg></div>
<div class="b" style="left:2px;top:411px;width:50px;height:50px;background:#5470a0;"><svg width="50" height="50" viewBox="0 0 51 50"><polygon points="25.0,9.0 39.8,17.5 25.0,26.0 10.2,17.5" fill="#f0a048"/><polygon points="10.2,17.5 25.0,26.0 25.0,43.0 10.2,34.5" fill="#7a7a7a"/><polygon points="25.0,26.0 39.8,17.5 39.8,34.5 25.0,43.0" fill="#4a4a4a"/><polygon points="25.0,9.0 39.8,17.5 39.8,34.5 25.0,43.0 10.2,34.5 10.2,17.5" fill="none" stroke="#1a1a1a" stroke-width="1.8" stroke-linejoin="round"/><polyline points="10.2,17.5 25.0,26.0 39.8,17.5" fill="none" stroke="#1a1a1a" stroke-width="1.4400000000000002"/><line x1="25" y1="26" x2="25" y2="43" stroke="#1a1a1a" stroke-width="1.4400000000000002"/></svg></div>
<div class="b" style="left:2px;top:468px;width:50px;height:50px;background:#4a4a4a;"><svg width="50" height="50" viewBox="0 0 51 50"><rect x="10" y="10" width="32" height="32" fill="none" stroke="#161616" stroke-width="2.6"/><path d="M26,10 V42 M10,26 H42" stroke="#161616" stroke-width="2.6"/><rect x="7" y="7" width="22" height="22" fill="#f0a048" stroke="#161616" stroke-width="2.2"/></svg></div>
<div class="b" style="left:2px;top:525px;width:50px;height:50px;background:#4a4a4a;"><svg width="50" height="50" viewBox="0 0 51 50"><path d="M11,8 L16,15 H13 V36 H38 V33 L45,38.5 L38,44 V41 H8 V15 H6 Z" fill="#f0a048" stroke="#1a1a1a" stroke-width="1.4" stroke-linejoin="round"/></svg></div>
<div class="b" style="left:2px;top:593px;width:50px;height:50px;background:#4a4a4a;"><svg width="50" height="50" viewBox="0 0 51 50"><polygon points="25.0,9.6 47.6,24.6 25.0,39.6 2.3,24.6" fill="#f0a048" stroke="#1a1a1a" stroke-width="1.3" stroke-linejoin="round"/><polygon points="25.0,11.5 27.7,13.3 25.0,15.2 22.3,13.3" fill="#2c2c2c" stroke="#1a1a1a" stroke-width="0.9"/><polygon points="19.3,15.3 22.0,17.1 19.3,18.9 16.6,17.1" fill="#2c2c2c" stroke="#1a1a1a" stroke-width="0.9"/><polygon points="13.6,19.0 16.4,20.9 13.6,22.7 10.9,20.9" fill="#2c2c2c" stroke="#1a1a1a" stroke-width="0.9"/><polygon points="8.0,22.8 10.7,24.6 8.0,26.4 5.2,24.6" fill="#2c2c2c" stroke="#1a1a1a" stroke-width="0.9"/><polygon points="30.6,15.3 33.4,17.1 30.6,18.9 27.9,17.1" fill="#2c2c2c" stroke="#1a1a1a" stroke-width="0.9"/><polygon points="25.0,19.1 27.7,20.9 25.0,22.6 22.2,20.9" fill="#2c2c2c" stroke="#1a1a1a" stroke-width="0.9"/><polygon points="19.3,22.8 22.0,24.6 19.3,26.4 16.6,24.6" fill="#2c2c2c" stroke="#1a1a1a" stroke-width="0.9"/><polygon points="13.6,26.6 16.3,28.4 13.6,30.2 10.9,28.4" fill="#2c2c2c" stroke="#1a1a1a" stroke-width="0.9"/><polygon points="36.3,19.1 39.0,20.9 36.3,22.6 33.6,20.9" fill="#2c2c2c" stroke="#1a1a1a" stroke-width="0.9"/><polygon points="30.6,22.8 33.3,24.6 30.6,26.4 27.9,24.6" fill="#2c2c2c" stroke="#1a1a1a" stroke-width="0.9"/><polygon points="24.9,26.5 27.7,28.4 24.9,30.2 22.2,28.4" fill="#2c2c2c" stroke="#1a1a1a" stroke-width="0.9"/><polygon points="19.3,30.3 22.0,32.1 19.3,33.9 16.5,32.1" fill="#2c2c2c" stroke="#1a1a1a" stroke-width="0.9"/><polygon points="41.9,22.8 44.7,24.6 41.9,26.4 39.2,24.6" fill="#2c2c2c" stroke="#1a1a1a" stroke-width="0.9"/><polygon points="36.3,26.6 39.0,28.4 36.3,30.1 33.5,28.4" fill="#2c2c2c" stroke="#1a1a1a" stroke-width="0.9"/><polygon points="30.6,30.3 33.3,32.1 30.6,33.9 27.9,32.1" fill="#2c2c2c" stroke="#1a1a1a" stroke-width="0.9"/><polygon points="24.9,34.1 27.6,35.9 24.9,37.7 22.2,35.9" fill="#2c2c2c" stroke="#1a1a1a" stroke-width="0.9"/></svg></div>
<div class="b" style="left:2px;top:644px;width:50px;height:52px;background:#5470a0;"><svg width="50" height="52" viewBox="0 0 51 50"><polygon points="24.5,4.4 46.7,18.5 24.5,32.6 3.1,18.5" fill="#161616" stroke="#161616" stroke-width="1.3" stroke-linejoin="round"/><polygon points="24.5,5.5 28.4,7.9 24.7,10.4 20.8,7.9" fill="#5a78a8" stroke="#161616" stroke-width="0"/><polygon points="19.2,9.0 23.1,11.4 19.3,13.9 15.4,11.4" fill="#5a78a8" stroke="#161616" stroke-width="0"/><polygon points="13.8,12.5 17.7,15.0 14.0,17.4 10.1,15.0" fill="#5a78a8" stroke="#161616" stroke-width="0"/><polygon points="8.5,16.0 12.4,18.5 8.6,21.0 4.7,18.5" fill="#5a78a8" stroke="#161616" stroke-width="0"/><polygon points="30.1,9.0 34.0,11.5 30.2,13.9 26.3,11.4" fill="#5a78a8" stroke="#161616" stroke-width="0"/><polygon points="24.7,12.5 28.6,15.0 24.9,17.4 21.0,15.0" fill="#5a78a8" stroke="#161616" stroke-width="0"/><polygon points="19.4,16.0 23.3,18.5 19.5,21.0 15.6,18.5" fill="#5a78a8" stroke="#161616" stroke-width="0"/><polygon points="14.0,19.6 17.9,22.0 14.2,24.5 10.3,22.0" fill="#5a78a8" stroke="#161616" stroke-width="0"/><polygon points="35.6,12.5 39.5,15.0 35.8,17.4 31.9,15.0" fill="#5a78a8" stroke="#161616" stroke-width="0"/><polygon points="30.3,16.0 34.2,18.5 30.4,21.0 26.5,18.5" fill="#5a78a8" stroke="#161616" stroke-width="0"/><polygon points="24.9,19.6 28.8,22.0 25.1,24.5 21.2,22.0" fill="#5a78a8" stroke="#161616" stroke-width="0"/><polygon points="19.6,23.1 23.5,25.6 19.7,28.0 15.8,25.5" fill="#5a78a8" stroke="#161616" stroke-width="0"/><polygon points="41.2,16.0 45.1,18.5 41.3,21.0 37.4,18.5" fill="#5a78a8" stroke="#161616" stroke-width="0"/><polygon points="35.8,19.6 39.7,22.0 36.0,24.5 32.1,22.0" fill="#5a78a8" stroke="#161616" stroke-width="0"/><polygon points="30.5,23.1 34.4,25.5 30.6,28.0 26.7,25.6" fill="#5a78a8" stroke="#161616" stroke-width="0"/><polygon points="25.1,26.6 29.0,29.1 25.3,31.5 21.4,29.1" fill="#5a78a8" stroke="#161616" stroke-width="0"/><path d="M6.5,35 V31 A4.5,4.5 0 0 1 15.5,31 V35" fill="none" stroke="#161616" stroke-width="2.4"/><rect x="3" y="35" width="16" height="13.4" rx="1.2" fill="#161616"/><circle cx="10.8" cy="42" r="2.1" fill="#5a78a8"/></svg><div class="tri"></div></div>
<div class="b" style="left:2px;top:714px;width:50px;height:50px;background:#4a4a4a;"><svg width="50" height="50" viewBox="0 0 51 50"><g transform="translate(27,25) rotate(-45)"><path d="M-14,-9 V1 A14,14 0 0 0 14,1 V-9 H5 V1 A5,5 0 0 1 -5,1 V-9 Z" fill="#ea8a3a" stroke="#1a1a1a" stroke-width="1.6" stroke-linejoin="round"/><rect x="-14.8" y="-15" width="10.6" height="7" fill="#1a1a1a"/><rect x="4.2" y="-15" width="10.6" height="7" fill="#1a1a1a"/></g></svg><div class="tri"></div></div>
<div class="b" style="left:2px;top:782px;width:50px;height:50px;background:#eef594;"><svg width="50" height="50" viewBox="0 0 51 50"><circle cx="25" cy="25" r="18.5" fill="#f0a048" stroke="#1a1a1a" stroke-width="2"/><path d="M20,7 Q30,25 22,43 M7,20 Q25,28 43,22" fill="none" stroke="#5a3010" stroke-width="0.8"/><text x="25" y="34" text-anchor="middle" font-family="Liberation Sans" style="font-weight:700" font-size="27" fill="#161616">S</text></svg><div class="tri"></div></div>
<div class="sb" style="left:71px;width:95px;color:#dcdcdc;">ライブ選択<div class="tri" style="border-left-width:7px;border-bottom-width:7px;right:2px;bottom:2px"></div></div>
<div class="sb" style="left:171px;width:94px;color:#dcdcdc;">ループ選択</div>
<div class="sb" style="left:267px;width:95px;color:#dcdcdc;">リング選択</div>
<div class="sb" style="left:365px;width:156px;color:#dcdcdc;">シャープエッジ選択</div>
<div class="sb" style="left:527px;width:80px;color:#dcdcdc;">全て反転</div>
<div class="sb" style="left:613px;width:165px;color:#dcdcdc;padding-left:9px;text-align:left;">選択範囲を拡大...<svg width="20" height="20" viewBox="-10 -10 20 20" style="position:absolute;right:3px;top:4px"><circle r="6.3" fill="#1c1c1c"/><rect x="-2.6" y="-8.8" width="5.2" height="4.5" rx="0.8" fill="#1c1c1c" transform="rotate(0)"/><rect x="-2.6" y="-8.8" width="5.2" height="4.5" rx="0.8" fill="#1c1c1c" transform="rotate(60)"/><rect x="-2.6" y="-8.8" width="5.2" height="4.5" rx="0.8" fill="#1c1c1c" transform="rotate(120)"/><rect x="-2.6" y="-8.8" width="5.2" height="4.5" rx="0.8" fill="#1c1c1c" transform="rotate(180)"/><rect x="-2.6" y="-8.8" width="5.2" height="4.5" rx="0.8" fill="#1c1c1c" transform="rotate(240)"/><rect x="-2.6" y="-8.8" width="5.2" height="4.5" rx="0.8" fill="#1c1c1c" transform="rotate(300)"/><circle r="2.3" fill="#4a4a4a"/></svg></div>
<div class="sb" style="left:780px;width:127px;color:#dcdcdc;">選択範囲を縮小</div>
<div class="sb" style="left:909px;width:200px;color:#dcdcdc;">連続したエレメントを選択</div>
<div class="sb" style="left:1112px;width:135px;color:#dcdcdc;padding-left:9px;text-align:left;">ミラー選択...<svg width="20" height="20" viewBox="-10 -10 20 20" style="position:absolute;right:3px;top:4px"><circle r="6.3" fill="#1c1c1c"/><rect x="-2.6" y="-8.8" width="5.2" height="4.5" rx="0.8" fill="#1c1c1c" transform="rotate(0)"/><rect x="-2.6" y="-8.8" width="5.2" height="4.5" rx="0.8" fill="#1c1c1c" transform="rotate(60)"/><rect x="-2.6" y="-8.8" width="5.2" height="4.5" rx="0.8" fill="#1c1c1c" transform="rotate(120)"/><rect x="-2.6" y="-8.8" width="5.2" height="4.5" rx="0.8" fill="#1c1c1c" transform="rotate(180)"/><rect x="-2.6" y="-8.8" width="5.2" height="4.5" rx="0.8" fill="#1c1c1c" transform="rotate(240)"/><rect x="-2.6" y="-8.8" width="5.2" height="4.5" rx="0.8" fill="#1c1c1c" transform="rotate(300)"/><circle r="2.3" fill="#4a4a4a"/></svg></div>
<div class="sb" style="left:1253px;width:170px;color:#7a7a7a;">選択エレメントを隠す</div>
<div class="sb" style="left:1425px;width:200px;color:#dcdcdc;">選択エレメント以外を隠す</div>
<div class="sb" style="left:1627px;width:82px;color:#dcdcdc;">全て表示</div>
<div class="sb" style="left:1715px;width:125px;color:#e6f08a;">選択範囲を記録</div>
<div class="sb" style="left:1846px;width:126px;color:#dcdcdc;">選択範囲を変換</div>
<div class="b" style="left:71px;top:1339px;width:50px;height:51px;background:#4a4a4a;"><svg width="50" height="51" viewBox="0 0 51 50"><path d="M8,34 L25,23 L42,34" fill="none" stroke="#6a6a6a" stroke-width="3.5" stroke-linecap="round"/><circle cx="25" cy="23" r="3.5" fill="#5a5048" stroke="#4a4a4a"/></svg><div class="tri"></div></div>
<div class="b" style="left:127px;top:1339px;width:50px;height:51px;background:#4a4a4a;"><svg width="50" height="51" viewBox="0 0 51 50"><polygon points="13.7,32.2 40.2,32.8 32.7,46.6 9.7,40.9" fill="#8c8c8c" stroke="#161616" stroke-width="1.6" stroke-linejoin="round"/><path d="M26.4,5.2 L28.7,2 H47.9 L35,15 Z" fill="#1c1c1c"/><path d="M9.4,31 L12.6,16.7 L27.5,7.8 L33,13 L25.8,27.6 Z" fill="#f0a048" stroke="#1a1a1a" stroke-width="1.5" stroke-linejoin="round"/><path d="M9.7,30.5 L20.9,20.2" stroke="#1a1a1a" stroke-width="1.2"/><circle cx="20.9" cy="20.2" r="1.8" fill="#1a1a1a"/></svg><div class="tri"></div></div>
<div class="b" style="left:179px;top:1339px;width:51px;height:51px;background:#4a4a4a;"><svg width="51" height="51" viewBox="0 0 51 50"><polygon points="15.2,12.4 46.2,20.2 35.9,38.8 6.6,30.5" fill="#8c8c8c"/><polygon points="22.5,21.1 32.6,23.7 29.4,29.9 19.4,27.2" fill="#f0a048"/><path d="M25.5,15.0 L16.4,33.3 M12.3,18.4 L42.8,26.4" stroke="#161616" stroke-width="1.3"/><path d="M35.9,17.6 L26.1,36.0 M9.5,24.5 L39.3,32.6" stroke="#161616" stroke-width="1.3"/><polygon points="15.2,12.4 46.2,20.2 35.9,38.8 6.6,30.5" fill="none" stroke="#161616" stroke-width="1.6" stroke-linejoin="round"/></svg></div>
<div class="b" style="left:236px;top:1339px;width:50px;height:51px;background:#4a4a4a;"><svg width="50" height="51" viewBox="0 0 51 50"><path d="M26,26 L40,4 L43,6 L30,28 Z" fill="#f0a048" stroke="#1a1a1a" stroke-width="1.2"/><path d="M22,26 Q28,24 29,30 Q26,37 18,35 Q22,31 22,26 Z" fill="#1c1c1c"/><defs><clipPath id="mc17"><path d="M3,47 L15,40 Q25,27 35,40 L47,47 Z"/></clipPath></defs><g clip-path="url(#mc17)"><path d="M3,47 L15,40 Q25,27 35,40 L47,47 Z" fill="#f0a048" stroke="#161616" stroke-width="1.1"/><line x1="2" y1="38" x2="48" y2="38" stroke="#161616" stroke-width="1.1"/><line x1="2" y1="42" x2="48" y2="42" stroke="#161616" stroke-width="1.1"/><line x1="2" y1="46" x2="48" y2="46" stroke="#161616" stroke-width="1.1"/><line x1="10" y1="32" x2="10" y2="47" stroke="#161616" stroke-width="1.1"/><line x1="17" y1="32" x2="17" y2="47" stroke="#161616" stroke-width="1.1"/><line x1="25" y1="32" x2="25" y2="47" stroke="#161616" stroke-width="1.1"/><line x1="33" y1="32" x2="33" y2="47" stroke="#161616" stroke-width="1.1"/><line x1="40" y1="32" x2="40" y2="47" stroke="#161616" stroke-width="1.1"/></g><path d="M3,47 L15,40 Q25,27 35,40 L47,47 Z" fill="none" stroke="#161616" stroke-width="1"/></svg></div>
<div class="b" style="left:288px;top:1339px;width:51px;height:51px;background:#4a4a4a;"><svg width="51" height="51" viewBox="0 0 51 50"><path d="M15,26 V17 A10,10 0 0 1 35,17 V26 H29 V17 A4,4 0 0 0 21,17 V26 Z" fill="#f0a048" stroke="#1a1a1a" stroke-width="1.5"/><rect x="14" y="22" width="8" height="5" fill="#1c1c1c"/><rect x="28" y="22" width="8" height="5" fill="#1c1c1c"/><defs><clipPath id="mc18"><path d="M3,47 L15,40 Q25,27 35,40 L47,47 Z"/></clipPath></defs><g clip-path="url(#mc18)"><path d="M3,47 L15,40 Q25,27 35,40 L47,47 Z" fill="#f0a048" stroke="#161616" stroke-width="1.1"/><line x1="2" y1="38" x2="48" y2="38" stroke="#161616" stroke-width="1.1"/><line x1="2" y1="42" x2="48" y2="42" stroke="#161616" stroke-width="1.1"/><line x1="2" y1="46" x2="48" y2="46" stroke="#161616" stroke-width="1.1"/><line x1="10" y1="32" x2="10" y2="47" stroke="#161616" stroke-width="1.1"/><line x1="17" y1="32" x2="17" y2="47" stroke="#161616" stroke-width="1.1"/><line x1="25" y1="32" x2="25" y2="47" stroke="#161616" stroke-width="1.1"/><line x1="33" y1="32" x2="33" y2="47" stroke="#161616" stroke-width="1.1"/><line x1="40" y1="32" x2="40" y2="47" stroke="#161616" stroke-width="1.1"/></g><path d="M3,47 L15,40 Q25,27 35,40 L47,47 Z" fill="none" stroke="#161616" stroke-width="1"/></svg></div>
<div class="b" style="left:341px;top:1339px;width:51px;height:51px;background:#4a4a4a;"><svg width="51" height="51" viewBox="0 0 51 50"><path d="M9,27 Q12,15 25,13 L31,13 L35,27 Z" fill="#f0a048" stroke="#1a1a1a" stroke-width="1.5"/><path d="M20,11 H33 L37,27" fill="none" stroke="#1a1a1a" stroke-width="2"/><circle cx="17" cy="21" r="1.5" fill="#1c1c1c"/><defs><clipPath id="mc19"><path d="M3,47 L15,40 Q25,27 35,40 L47,47 Z"/></clipPath></defs><g clip-path="url(#mc19)"><path d="M3,47 L15,40 Q25,27 35,40 L47,47 Z" fill="#f0a048" stroke="#161616" stroke-width="1.1"/><line x1="2" y1="38" x2="48" y2="38" stroke="#161616" stroke-width="1.1"/><line x1="2" y1="42" x2="48" y2="42" stroke="#161616" stroke-width="1.1"/><line x1="2" y1="46" x2="48" y2="46" stroke="#161616" stroke-width="1.1"/><line x1="10" y1="32" x2="10" y2="47" stroke="#161616" stroke-width="1.1"/><line x1="17" y1="32" x2="17" y2="47" stroke="#161616" stroke-width="1.1"/><line x1="25" y1="32" x2="25" y2="47" stroke="#161616" stroke-width="1.1"/><line x1="33" y1="32" x2="33" y2="47" stroke="#161616" stroke-width="1.1"/><line x1="40" y1="32" x2="40" y2="47" stroke="#161616" stroke-width="1.1"/></g><path d="M3,47 L15,40 Q25,27 35,40 L47,47 Z" fill="none" stroke="#161616" stroke-width="1"/></svg></div>
<div class="b" style="left:399px;top:1339px;width:50px;height:51px;background:#4a4a4a;"><svg width="50" height="51" viewBox="0 0 51 50"><polygon points="9,20.5 25,28.5 25,46 9,38" fill="#8a8a8a"/><polygon points="25,28.5 41,20.5 41,38 25,46" fill="#4c4c4c"/><polygon points="9,13 25,21 25,28.5 9,20.5" fill="#f0a048"/><polygon points="25,21 41,13 41,20.5 25,28.5" fill="#d88a38"/><polygon points="14,7 25,4 36,7 41,13 25,21 9,13" fill="#f0a048"/><path d="M14,7 L25,4 L36,7 L41,13 V38 L25,46 L9,38 V13 Z M9,13 L25,21 L41,13 M25,21 V46 M9,20.5 L25,28.5 L41,20.5" fill="none" stroke="#161616" stroke-width="1.6" stroke-linejoin="round"/></svg></div>
<div class="b" style="left:451px;top:1339px;width:51px;height:51px;background:#4a4a4a;"><svg width="51" height="51" viewBox="0 0 51 50"><polygon points="9,21.5 25,29.5 25,46.5 9,38.5" fill="#8a8a8a"/><polygon points="25,29.5 41,21.5 41,38.5 25,46.5" fill="#4c4c4c"/><polygon points="9,13.5 25,21.5 25,29.5 9,21.5" fill="#e89a48"/><polygon points="25,21.5 41,13.5 41,21.5 25,29.5" fill="#c87a30"/><polygon points="14,7.5 25,4.5 36,7.5 41,13.5 25,21.5 9,13.5" fill="#f0a048"/><path d="M14,7.5 L25,4.5 L36,7.5 L41,13.5 V38.5 L25,46.5 L9,38.5 V13.5 Z M9,13.5 L25,21.5 L41,13.5 M25,21.5 V46.5 M9,21.5 L25,29.5 L41,21.5" fill="none" stroke="#161616" stroke-width="1.6" stroke-linejoin="round"/></svg><div class="tri"></div></div>
<div class="b" style="left:504px;top:1339px;width:52px;height:51px;background:#4a4a4a;"><svg width="52" height="51" viewBox="0 0 51 50"><polygon points="25.0,8.0 40.7,17.0 25.0,26.0 9.3,17.0" fill="#8a8a8a"/><polygon points="9.3,17.0 25.0,26.0 25.0,44.0 9.3,35.0" fill="#8a8a8a"/><polygon points="25.0,26.0 40.7,17.0 40.7,35.0 25.0,44.0" fill="#5a5a5a"/><polygon points="25.0,8.0 40.7,17.0 40.7,35.0 25.0,44.0 9.3,35.0 9.3,17.0" fill="none" stroke="#1a1a1a" stroke-width="1.6" stroke-linejoin="round"/><polyline points="9.3,17.0 25.0,26.0 40.7,17.0" fill="none" stroke="#1a1a1a" stroke-width="1.2800000000000002"/><line x1="25" y1="26" x2="25" y2="44" stroke="#1a1a1a" stroke-width="1.2800000000000002"/><polygon points="25,11 34,16 25,21 16,16" fill="#3a3a3a" stroke="#161616" stroke-width="1"/><polygon points="25,13 31,16 25,19 19,16" fill="#f0a048"/></svg></div>
<div class="b" style="left:557px;top:1339px;width:51px;height:51px;background:#4a4a4a;"><svg width="51" height="51" viewBox="0 0 51 50"><path d="M11,6 H40 V20 H33 A8,8 0 0 0 18,20 H11 Z" fill="#f0a048" stroke="#1a1a1a" stroke-width="1.6"/><rect x="9" y="30" width="33" height="14" fill="#8a8a8a" stroke="#161616" stroke-width="1.6"/><rect x="20" y="30" width="11" height="14" fill="#f0a048" stroke="#161616" stroke-width="1.6"/></svg></div>
<div class="b" style="left:615px;top:1339px;width:50px;height:51px;background:#4a4a4a;"><svg width="50" height="51" viewBox="0 0 51 50"><path d="M6,44 Q20,28 32,19 L37,23 Q26,36 6,44 Z" fill="#f0a048" stroke="#1a1a1a" stroke-width="1.5"/><path d="M33,18 L42,8 L46,11 L38,22 Z" fill="#1c1c1c"/></svg></div>
<div class="b" style="left:667px;top:1339px;width:52px;height:51px;background:#4a4a4a;"><svg width="52" height="51" viewBox="0 0 51 50"><polygon points="25.0,8.0 40.7,17.0 25.0,26.0 9.3,17.0" fill="#8a8a8a"/><polygon points="9.3,17.0 25.0,26.0 25.0,44.0 9.3,35.0" fill="#7a7a7a"/><polygon points="25.0,26.0 40.7,17.0 40.7,35.0 25.0,44.0" fill="#5a5a5a"/><polygon points="25.0,8.0 40.7,17.0 40.7,35.0 25.0,44.0 9.3,35.0 9.3,17.0" fill="none" stroke="#1a1a1a" stroke-width="1.6" stroke-linejoin="round"/><polyline points="9.3,17.0 25.0,26.0 40.7,17.0" fill="none" stroke="#1a1a1a" stroke-width="1.2800000000000002"/><line x1="25" y1="26" x2="25" y2="44" stroke="#1a1a1a" stroke-width="1.2800000000000002"/><polygon points="12,19 38,19 25,39" fill="none" stroke="#f0a048" stroke-width="2.8"/><polygon points="19,23 31,23 25,33" fill="#3a3a3a"/></svg></div>
<div class="b" style="left:720px;top:1339px;width:52px;height:51px;background:#5470a0;"><svg width="52" height="51" viewBox="0 0 51 50"><polygon points="25.0,9.0 39.8,17.5 25.0,26.0 10.2,17.5" fill="#8a8a8a"/><polygon points="10.2,17.5 25.0,26.0 25.0,43.0 10.2,34.5" fill="#7a7a7a"/><polygon points="25.0,26.0 39.8,17.5 39.8,34.5 25.0,43.0" fill="#4a4a4a"/><polygon points="25.0,9.0 39.8,17.5 39.8,34.5 25.0,43.0 10.2,34.5 10.2,17.5" fill="none" stroke="#1a1a1a" stroke-width="1.8" stroke-linejoin="round"/><polyline points="10.2,17.5 25.0,26.0 39.8,17.5" fill="none" stroke="#1a1a1a" stroke-width="1.4400000000000002"/><line x1="25" y1="26" x2="25" y2="43" stroke="#1a1a1a" stroke-width="1.4400000000000002"/><polyline points="15.5,37.5 15.5,20.3 30.2,11.8" fill="none" stroke="#f0a048" stroke-width="2.4"/></svg></div>
<div class="b" style="left:778px;top:1339px;width:50px;height:51px;background:#4a4a4a;"><svg width="50" height="51" viewBox="0 0 51 50"><g opacity="0.45"><path d="M6,42 Q20,28 32,19 L37,23 Q26,36 6,42 Z" fill="#8a6040"/><path d="M33,18 L42,8 L46,11 L38,22 Z" fill="#2a2a2a"/><rect x="8" y="30" width="4" height="14" fill="#666"/><rect x="20" y="30" width="4" height="14" fill="#666"/><rect x="32" y="30" width="4" height="14" fill="#666"/></g></svg></div>
<div class="b" style="left:834px;top:1339px;width:50px;height:51px;background:#4a4a4a;"><svg width="50" height="51" viewBox="0 0 51 50"><g opacity="0.45"><polygon points="20,8 44,8 36,22 12,22" fill="#8a8a8a" stroke="#333"/><polygon points="20,28 44,30 36,44 12,42" fill="#7a5a48" stroke="#333"/><path d="M10,14 V32 H6 L11,39 L16,32 H12 V14 Z" fill="#8a8a8a"/></g></svg></div>
<div class="b" style="left:885px;top:1339px;width:52px;height:51px;background:#4a4a4a;"><svg width="52" height="51" viewBox="0 0 51 50"><polygon points="20,6 44,10 38,22 14,18" fill="#8a8a8a" stroke="#161616" stroke-width="1.2"/><line x1="20" y1="6" x2="38" y2="22" stroke="#e0804a" stroke-width="2.5"/><circle cx="20" cy="6" r="2.3" fill="#e0804a" stroke="#161616"/><circle cx="38" cy="22" r="2.3" fill="#e0804a" stroke="#161616"/><polygon points="22,28 46,30 40,44 15,41" fill="#e0804a" stroke="#161616" stroke-width="1.2"/><path d="M9,15 V31 H5 L11,39 L17,31 H13 V15 Z" fill="#eeeeee" stroke="#161616" stroke-width="1.2"/></svg></div>
<div class="b" style="left:939px;top:1339px;width:51px;height:51px;background:#4a4a4a;"><svg width="51" height="51" viewBox="0 0 51 50"><rect x="10" y="6" width="4.5" height="38" fill="#8a8a8a" stroke="#161616" stroke-width="1.2"/><rect x="35" y="6" width="4.5" height="38" fill="#8a8a8a" stroke="#161616" stroke-width="1.2"/><rect x="22.5" y="6" width="5" height="38" fill="#f0a048"/><path d="M4,22 H14 V18 L23,25 L14,32 V28 H4 Z M46,22 H36 V18 L27,25 L36,32 V28 H46 Z" fill="#eeeeee" stroke="#161616" stroke-width="1"/></svg></div>
<div class="b" style="left:992px;top:1339px;width:52px;height:51px;background:#4a4a4a;"><svg width="52" height="51" viewBox="0 0 51 50"><circle cx="12" cy="12" r="3.6" fill="#f0a048" stroke="#1a1a1a"/><circle cx="12" cy="38" r="3.6" fill="#f0a048" stroke="#1a1a1a"/><circle cx="41" cy="25" r="3.6" fill="#f0a048" stroke="#1a1a1a"/><path d="M8,21.5 H22 V17 L30,25 L22,33 V28.5 H8 Z" fill="#eeeeee" stroke="#161616" stroke-width="1"/></svg></div>
<div class="b" style="left:1050px;top:1339px;width:50px;height:51px;background:#4a4a4a;"><svg width="50" height="51" viewBox="0 0 51 50"><g opacity="0.4"><rect x="6" y="6" width="38" height="38" fill="none" stroke="#2a2a2a" stroke-width="4"/><rect x="16" y="8" width="4" height="34" fill="#c08040"/><path d="M22,22 H34 V18 L42,25 L34,32 V28 H22 Z" fill="#9a9a9a"/></g></svg></div>
<div class="b" style="left:1106px;top:1339px;width:50px;height:51px;background:#4a4a4a;"><svg width="50" height="51" viewBox="0 0 51 50"><line x1="25" y1="5" x2="25" y2="45" stroke="#161616" stroke-width="2.5"/><polygon points="5,12 21,25 5,38" fill="#8a8a8a" stroke="#161616" stroke-width="1"/><polygon points="45,12 29,25 45,38" fill="#f0a048" stroke="#161616" stroke-width="1"/></svg></div>
<div class="b" style="left:1162px;top:1339px;width:50px;height:51px;background:#4a4a4a;"><svg width="50" height="51" viewBox="0 0 51 50"><path d="M10,15 V42 H38" fill="none" stroke="#161616" stroke-width="3.5"/><path d="M5,20 L10,12 L15,20 Z M35,37 L43,42 L35,47 Z" fill="#161616"/><path d="M28,3 L32,8 H30 V14 H36 V12 L41,16 L36,20 V18 H30 V24 H32 L28,29 L24,24 H26 V18 H20 V20 L15,16 L20,12 V14 H26 V8 H24 Z" fill="#f0a048" stroke="#1a1a1a" stroke-width="1.2"/></svg><div class="tri"></div></div>
<div class="b" style="left:1219px;top:1339px;width:49px;height:51px;background:#4a4a4a;"><svg width="49" height="51" viewBox="0 0 51 50"><circle cx="11.0" cy="9.0" r="4.6" fill="#f0a048" stroke="#1a1a1a" stroke-width="1"/><circle cx="11.0" cy="22.5" r="4.6" fill="#f0a048" stroke="#1a1a1a" stroke-width="1"/><circle cx="25.5" cy="9.0" r="4.6" fill="#f0a048" stroke="#1a1a1a" stroke-width="1"/><circle cx="25.5" cy="22.5" r="4.6" fill="#f0a048" stroke="#1a1a1a" stroke-width="1"/><circle cx="40.0" cy="9.0" r="4.6" fill="#f0a048" stroke="#1a1a1a" stroke-width="1"/><circle cx="40.0" cy="22.5" r="4.6" fill="#f0a048" stroke="#1a1a1a" stroke-width="1"/><text x="25" y="47.5" text-anchor="middle" font-family="Liberation Sans" style="font-weight:700" font-size="17" fill="#161616" stroke="#161616" stroke-width="1.1">XYZ</text></svg></div>
<div class="b" style="left:1274px;top:1339px;width:50px;height:51px;background:#4a4a4a;"><svg width="50" height="51" viewBox="0 0 51 50"><defs><linearGradient id="cpg" x1="0" y1="0" x2="1" y2="1"><stop offset="0" stop-color="#f4b060"/><stop offset="1" stop-color="#c87a30"/></linearGradient></defs><path d="M12,20 Q14,12 24,11 L34,10 Q40,12 39,22 L38.5,34 Q37,41 28,42 L19,43 Q12,41 11.5,33 Z" fill="url(#cpg)"/><path d="M8.2,11 L31,6.7 L42.4,16.7 L41.7,38 L18.9,44.4 L8.9,32.3 Z M8.2,11 L18.9,21.6 L42.4,16.7 M18.9,21.6 V44.4" fill="none" stroke="#161616" stroke-width="1.4"/><circle cx="8.2" cy="11" r="2.1" fill="#f4f4f4"/><circle cx="31" cy="6.7" r="2.1" fill="#f4f4f4"/><circle cx="42.4" cy="16.7" r="2.1" fill="#f4f4f4"/><circle cx="41.7" cy="38" r="2.1" fill="#f4f4f4"/><circle cx="18.9" cy="44.4" r="2.1" fill="#f4f4f4"/><circle cx="8.9" cy="32.3" r="2.1" fill="#f4f4f4"/><circle cx="18.9" cy="21.6" r="2.1" fill="#f4f4f4"/></svg></div>
<div class="grip" style="left:1px;top:63px;width:9px;height:44px"></div>
<div class="grip" style="left:6px;top:117px;width:45px;height:8px"></div>
<div class="grip" style="left:58px;top:1308px;width:9px;height:22px"></div>
<div class="grip" style="left:58px;top:1343px;width:9px;height:44px"></div>
<div class="a" style="left:62px;top:153px;width:39px;height:25px;background:#343434;border-radius:3px"></div>
<div class="a lbl" style="left:67px;top:157px">透視</div>
<div class="a" style="left:949px;top:152px;width:156px;height:25px;background:#343434;border-radius:3px"></div>
<div class="a lbl" style="left:953px;top:157px">デフォルトカメラ</div>
<svg class="a" style="left:1078px;top:156px" width="24" height="20" viewBox="0 0 24 20"><circle cx="6" cy="6" r="3" fill="#c8daf4" stroke="#161616"/><circle cx="13" cy="5" r="3" fill="#c8daf4" stroke="#161616"/><rect x="4" y="10" width="11" height="7" fill="#161616"/><rect x="6" y="11.5" width="3" height="3" fill="#c8daf4"/><path d="M15,13 L21,10 V17 L15,15 Z" fill="#161616"/></svg>
<div class="a" style="left:448px;top:207px;width:987px;height:35px;background:#333333;border-radius:5px"></div>
<div class="a" style="left:471px;top:223px;width:945px;height:2.5px;background:#8a8a8a"></div>
<div class="a" style="left:942px;top:208px;width:1px;height:15px;border-left:1px dashed #8e8e8e"></div>
<svg class="a" style="left:0;top:0" width="2000" height="300"><polygon points="706,227 697,239 715,239" fill="#e6e6e6"/><polygon points="942,227 933,239 951,239" fill="#e6e6e6"/><polygon points="1179,227 1170,239 1188,239" fill="#a8c8f8"/><circle cx="1469.5" cy="225" r="17.5" fill="#333333"/><circle cx="1519.5" cy="225" r="17.5" fill="#333333"/><circle cx="1569.5" cy="225" r="17.5" fill="#333333"/><rect x="1461.5" y="218" width="3" height="14" fill="#e0e0e0"/><rect x="1468" y="218" width="3" height="14" fill="#e0e0e0"/><rect x="1474.5" y="218" width="3" height="14" fill="#e0e0e0"/><rect x="1513" y="223.5" width="13" height="3.2" fill="#e0e0e0"/><rect x="1517.9" y="218.5" width="3.2" height="13" fill="#e0e0e0"/><rect x="1563" y="223.5" width="13" height="3.2" fill="#e0e0e0"/><line x1="1946.5" y1="175" x2="1946.5" y2="201" stroke="#a8d8a8" stroke-width="1.6"/><line x1="1946" y1="201" x2="1972" y2="201" stroke="#5a8ad0" stroke-width="1.6"/><text x="1941" y="169" font-family="Liberation Sans" font-size="13" fill="#5ec46a">Y</text><text x="1957" y="212" font-family="Liberation Sans" font-size="12" fill="#d05050">X</text><text x="1979" y="208" font-family="Liberation Sans" font-size="14" fill="#4a86d4">Z</text></svg>
<div class="a" style="left:1153px;top:247px;width:52px;height:34px;border:1.2px solid #a8c4ee;border-radius:4px;background:#333"></div>
<div class="a lbl" style="left:1153px;top:255px;width:52px;text-align:center;font-size:15px;letter-spacing:0;color:#e6e6e6">75%</div>
<svg class="a" style="left:1880px;top:120px" width="120" height="28" viewBox="0 0 120 28"><g fill="#9a9a9a"><path d="M16,2 L21,7 H18 V11 H22 V8 L27,13 L22,18 V15 H18 V19 H21 L16,24 L11,19 H14 V15 H10 V18 L5,13 L10,8 V11 H14 V7 H11 Z"/></g><rect x="13.5" y="10.5" width="5" height="5" fill="#3a3a3a"/><path d="M45,2 L51,8 H47 V16 H43 V8 H39 Z" fill="#9a9a9a"/><path d="M36,16 H54 L45,25 Z" fill="none" stroke="#9a9a9a" stroke-width="1.8"/><path d="M72,21 A9,9 0 0 1 72,5" fill="none" stroke="#9a9a9a" stroke-width="2.2"/><path d="M77,5 A9,9 0 0 1 78,21" fill="none" stroke="#9a9a9a" stroke-width="2.2"/><path d="M75,2 L82,4 L77,9 Z M73,25 L66,22 L72,18 Z" fill="#9a9a9a"/><rect x="96" y="3" width="20" height="21" rx="1" fill="none" stroke="#9a9a9a" stroke-width="2"/><rect x="96" y="3" width="20" height="3" fill="#9a9a9a"/><path d="M96,14 H106 V24" fill="none" stroke="#9a9a9a" stroke-width="2"/></svg>
<div class="a" style="left:0;top:1394px;width:2000px;height:1px;background:#333"></div><div class="a" style="left:0;top:1395px;width:2000px;height:2px;background:#484848"></div>
<div class="a" style="left:1808px;top:1268px;width:170px;height:26px;background:#2e2e2e"></div>
<div class="a lbl" style="left:1814px;top:1269px;font-size:16px;color:#dcdcdc">グリッド間隔<span style="letter-spacing:0.6px"> : 50 cm</span></div>
</body></html>
